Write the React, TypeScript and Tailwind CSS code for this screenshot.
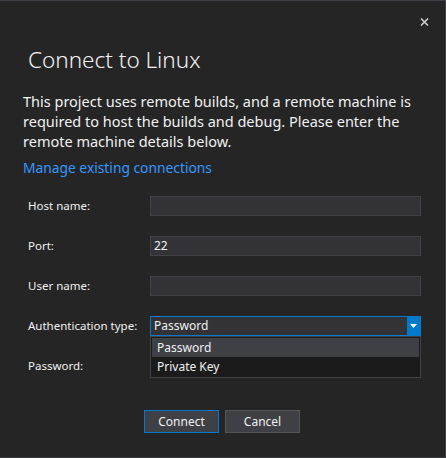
const fields = [
  { label: 'Host name:', value: '' },
  { label: 'Port:', value: '22' },
  { label: 'User name:', value: '' },
];

function TextBox({ value }: { value: string }) {
  return (
    <div className="h-[20px] w-[271px] border border-[#434346] bg-[#333337] px-[3px] text-[12px] leading-[18px] text-[#f1f1f1]">
      {value}
    </div>
  );
}

export default function App() {
  return (
    <div
      className="relative h-[458px] w-[446px] border-t border-r border-b border-[#3f3f46] bg-[#252526] text-[#f1f1f1]"
      style={{ fontFamily: '"Noto Sans", "Open Sans", sans-serif' }}
    >
      <button className="absolute left-[420px] top-[17px] text-[#c8c8c8]">
        <svg width="9" height="8" viewBox="0 0 9 8">
          <path d="M1 0.5L8 7.5M8 0.5L1 7.5" stroke="#cccccc" strokeWidth="1.6" />
        </svg>
      </button>

      <div className="pl-[23px] pr-[20px] pt-[43px]">
        <h1 className="pl-[5px] text-[22.5px] font-light leading-[32px] text-[#f1f1f1]">Connect to Linux</h1>

        <p className="mt-[15px] text-[14.5px] leading-[20px] text-[#f1f1f1]">
          This project uses remote builds, and a remote machine is required to host the builds and debug. Please enter the
          remote machine details below.
        </p>

        <a className="mt-[7px] block text-[13.8px] leading-[20px] text-[#3399ff]">Manage existing connections</a>

        <div className="mt-[18px] flex flex-col gap-[20px] pl-[5px]">
          {fields.map((f) => (
            <div key={f.label} className="flex items-center">
              <span className="w-[122px] text-[11.5px] leading-[20px]">{f.label}</span>
              <TextBox value={f.value} />
            </div>
          ))}

          <div className="relative flex items-center">
            <span className="w-[122px] text-[11.5px] leading-[20px]">Authentication type:</span>
            <div className="flex h-[20px] w-[271px] border border-[#007acc] bg-[#333337]">
              <span className="flex-1 px-[3px] text-[12px] leading-[18px]">Password</span>
              <span className="flex w-[13px] items-center justify-center bg-[#007acc]">
                <svg width="7" height="4" viewBox="0 0 7 4">
                  <path d="M0 0h7L3.5 4z" fill="#ffffff" />
                </svg>
              </span>
            </div>
            <div className="absolute left-[122px] top-[20px] z-10 w-[271px] border border-[#434346] bg-[#1b1b1c] p-[1px] text-[12px]">
              <div className="h-[19px] bg-[#3f3f46] px-[5px] leading-[19px]">Password</div>
              <div className="h-[19px] px-[5px] leading-[19px]">Private Key</div>
            </div>
          </div>

          <div className="flex items-center">
            <span className="w-[122px] text-[11.5px] leading-[20px]">Password:</span>
            <TextBox value="" />
          </div>
        </div>

        <div className="mt-[34px] flex justify-center gap-[6px] pr-[4px]">
          <button className="h-[23px] w-[75px] border border-[#007acc] bg-[#3f3f46] text-[12px] text-[#f1f1f1]">
            Connect
          </button>
          <button className="h-[23px] w-[75px] border border-[#555555] bg-[#3f3f46] text-[12px] text-[#f1f1f1]">
            Cancel
          </button>
        </div>
      </div>
    </div>
  );
}
